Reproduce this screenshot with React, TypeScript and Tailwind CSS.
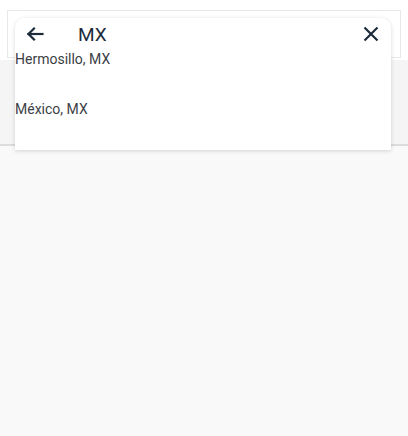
import React from 'react'

const results = ['Hermosillo, MX', 'México, MX']

export default function App() {
  return (
    <div className="w-[408px] h-[436px] bg-[#f9f9f9] font-['Roboto',sans-serif] text-[#1c2b3a]">
      <div className="relative h-[146px] bg-[#f5f5f5] border-b-2 border-[#dcdcdc]">
        <div className="h-[60px] bg-white px-[7px] pt-[10px]">
          <div className="h-[48px] border border-[#e8e8e8] bg-white" />
        </div>

        {/* search overlay */}
        <div className="absolute left-[15px] top-[18px] w-[376px] shadow-[0_1px_4px_rgba(0,0,0,0.16)] rounded-t-[10px]">
          <div className="flex h-[32px] items-center rounded-t-[10px] bg-white pl-[11px] pr-[12px]">
            <svg width="18" height="16" viewBox="0 0 18 16" fill="none" stroke="#1c2b3a" strokeWidth="2.2" strokeLinecap="square">
              <path d="M2.5 8H16.5" />
              <path d="M8 2.5L2.5 8L8 13.5" />
            </svg>
            <span className="ml-[34px] flex-1 text-[19px] leading-none">MX</span>
            <svg width="16" height="16" viewBox="0 0 16 16" fill="none" stroke="#1c2b3a" strokeWidth="2.2">
              <path d="M1.5 1.5L14.5 14.5M14.5 1.5L1.5 14.5" />
            </svg>
          </div>
          <div className="bg-white">
            {results.map((r) => (
              <div key={r} className="flex h-[50px] items-start pt-px text-[14px] leading-[17px] text-[#3b3f45]">
                {r}
              </div>
            ))}
          </div>
        </div>
      </div>
    </div>
  )
}
